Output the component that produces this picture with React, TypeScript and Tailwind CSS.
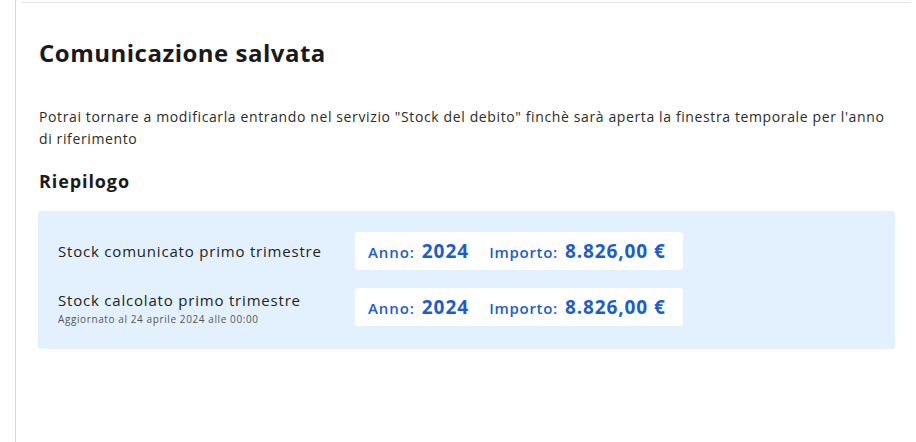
export default function App() {
  const rows = [
    { label: 'Stock comunicato primo trimestre', note: '' },
    { label: 'Stock calcolato primo trimestre', note: 'Aggiornato al 24 aprile 2024 alle 00:00' },
  ];

  return (
    <div className="flex h-[442px] w-full bg-white font-['Open_Sans',sans-serif] text-[#1a1a1a]">
      <div className="w-[15px] shrink-0" />
      <div className="flex-1 border-l border-[#d6d6d6] pl-[6px] pr-[6px]">
        <div className="mt-[2px] border-t border-[#e3e3e8]" />
        <div className="pl-[17px] pr-[15px]">
          <h1 className="mt-[34px] text-[24px] font-bold leading-[32px] tracking-[0.5px]">Comunicazione salvata</h1>
          <p className="mt-[37px] text-[14px] leading-[22px] tracking-[0.62px] text-[#2b2b2b]">
            Potrai tornare a modificarla entrando nel servizio "Stock del debito" finchè sarà aperta la finestra temporale per l'anno di riferimento
          </p>
          <h2 className="mt-[19px] text-[18px] font-bold leading-[24px] tracking-[0.9px]">Riepilogo</h2>
          <div className="ml-[-1px] mt-[18px] flex flex-col gap-[18px] rounded-[3px] bg-[#e3f1fe] px-[20px] pb-[23px] pt-[21px]">
            {rows.map((r) => (
              <div key={r.label} className="flex h-[38px] items-center">
                <div className="w-[297px] shrink-0">
                  <div className="text-[15px] leading-[20px] tracking-[0.8px] text-[#222]">{r.label}</div>
                  {r.note && <div className="mt-[3px] text-[10px] leading-[12px] tracking-[0.6px] text-[#555]">{r.note}</div>}
                </div>
                <div className="flex h-[38px] w-[328px] shrink-0 items-center gap-[20px] rounded-[3px] bg-white pl-[13px] text-[#1a5dcf]">
                  <div className="flex items-baseline gap-[7px]">
                    <span className="text-[15px] font-semibold tracking-[0.9px]">Anno:</span>
                    <span className="text-[19px] font-bold tracking-[1px]">2024</span>
                  </div>
                  <div className="flex items-baseline gap-[7px]">
                    <span className="text-[15px] font-semibold tracking-[0.7px]">Importo:</span>
                    <span className="text-[19px] font-bold tracking-[0.9px]">8.826,00 €</span>
                  </div>
                </div>
              </div>
            ))}
          </div>
        </div>
      </div>
    </div>
  );
}
